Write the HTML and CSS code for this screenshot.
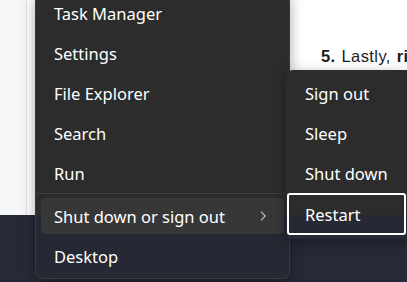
FILE: index.html
```html
<!DOCTYPE html>
<html lang="en">
<head>
  <meta charset="UTF-8" />
  <title>Power user menu</title>
  <link rel="stylesheet" href="styles.css">
</head>
<body>
  <div class="screen">
    <div class="page">
      <div class="sidebar"></div>
      <div class="article">
        <p class="step"><b>5.</b> Lastly, <b>right-click</b> the Start button</p>
      </div>
    </div>
    <div class="taskbar"></div>

    <div class="menu">
      <div class="menu-item">Task Manager</div>
      <div class="menu-item">Settings</div>
      <div class="menu-item">File Explorer</div>
      <div class="menu-item">Search</div>
      <div class="menu-item">Run</div>
      <div class="separator"></div>
      <div class="menu-item active">
        <span>Shut down or sign out</span>
        <svg class="chevron" width="10" height="10" viewBox="0 0 10 10">
          <path d="M3 0.6 L7.2 5 L3 9.4" fill="none" stroke="#c8c8c8" stroke-width="1.1" />
        </svg>
      </div>
      <div class="menu-item">Desktop</div>
    </div>

    <div class="submenu">
      <div class="menu-item">Sign out</div>
      <div class="menu-item">Sleep</div>
      <div class="menu-item">Shut down</div>
      <div class="menu-item focused">Restart</div>
    </div>
  </div>
</body>
</html>
```

FILE: styles.css
```css
:root {
  --menu-bg: #2c2c2c;
  --menu-bg-low: #262833;
  --hover-bg: #373737;
  --divider: #3e3e3e;
  --taskbar: #262a38;
}

body {
  margin: 0;
  font-family: 'Noto Sans', 'Open Sans', sans-serif;
}

.screen {
  position: relative;
  width: 407px;
  height: 282px;
  overflow: hidden;
  display: flex;
  flex-direction: column;
}

.page {
  height: 215px;
  display: flex;
  background: #fff;
}

.sidebar {
  width: 26px;
  background: #f5f6f8;
  border-right: 1px solid #e3e3e3;
}

.article {
  flex: 1;
  padding-left: 294px;
  white-space: nowrap;
  overflow: hidden;
}

.step {
  margin: 47px 0 0;
  font-family: 'Liberation Sans', Arial, sans-serif;
  font-size: 16.5px;
  letter-spacing: 0.4px;
  word-spacing: 1px;
  color: #1b1b1b;
}

.taskbar {
  flex: 1;
  background: var(--taskbar);
}

.menu,
.submenu {
  position: absolute;
  color: #fff;
  font-size: 16.5px;
  border-radius: 7px;
  box-shadow: 0 4px 14px rgba(0, 0, 0, 0.35);
}

.menu {
  left: 35px;
  top: -8px;
  width: 255px;
  padding: 0 0 2px;
  background: linear-gradient(to bottom, var(--menu-bg) 0, var(--menu-bg) 222px, var(--menu-bg-low) 223px);
  border: 1px solid #3a3a3a;
  box-sizing: border-box;
}

.submenu {
  left: 286px;
  top: 70px;
  width: 121px;
  padding: 3px 0 4px;
  background: linear-gradient(to bottom, var(--menu-bg) 0, var(--menu-bg) 145px, var(--menu-bg-low) 146px);
  border-radius: 7px 0 0 7px;
}

.menu-item {
  height: 40px;
  display: flex;
  align-items: center;
  justify-content: space-between;
  padding: 0 18px 0 18px;
}

.submenu .menu-item {
  padding-left: 19px;
}

.separator {
  height: 1px;
  margin: 0 0 4px;
  background: var(--divider);
}

.menu-item.active {
  margin: 0 5px;
  padding: 0 16px 0 13px;
  height: 36px;
  margin-top: 2px;
  margin-bottom: 2px;
  border-radius: 4px;
  background: var(--hover-bg);
}

.chevron {
  display: block;
}

.menu-item.focused {
  height: 38px;
  margin: 0 1px;
  padding-left: 16px;
  border: 2px solid #fff;
  border-radius: 3px;
}
```
